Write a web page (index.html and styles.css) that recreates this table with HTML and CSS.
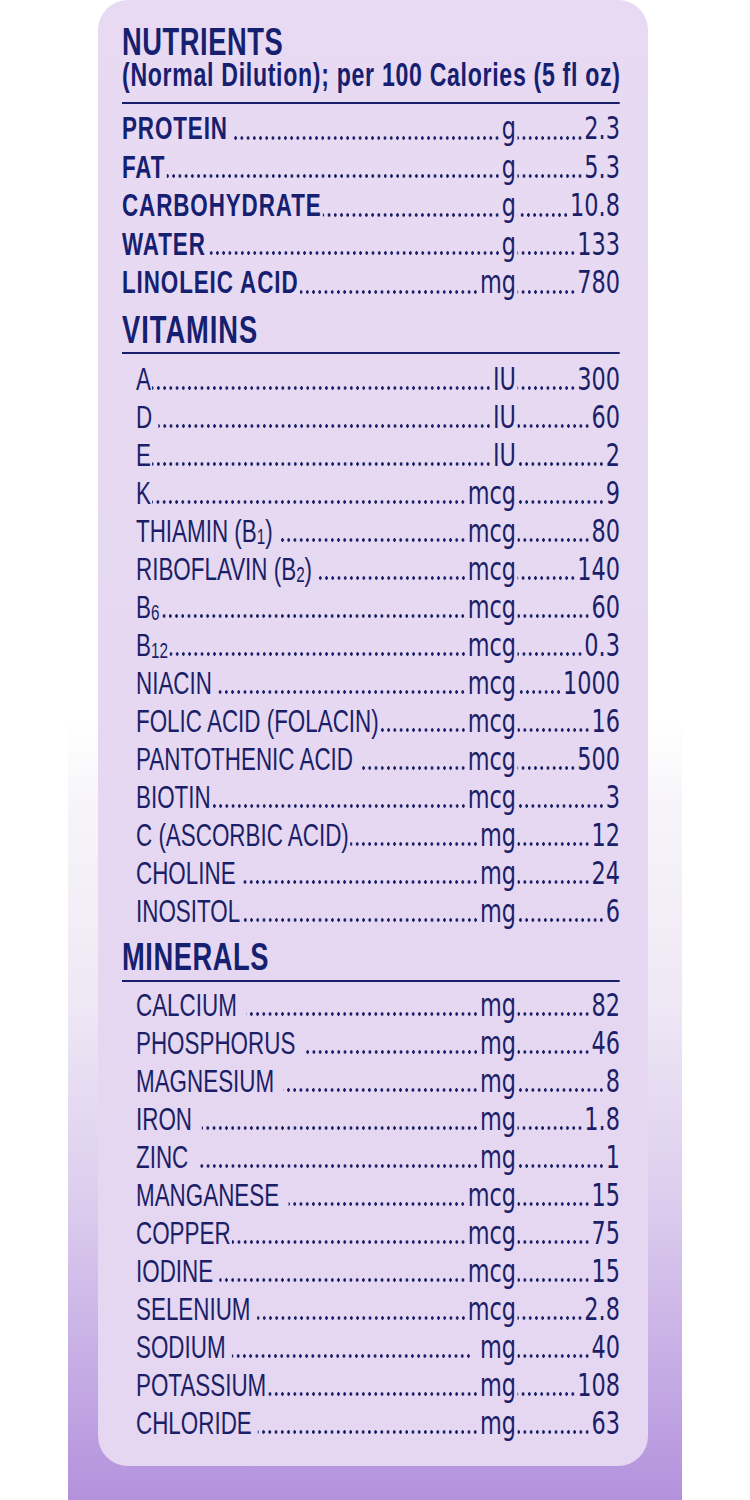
FILE: index.html
```html
<!DOCTYPE html>
<html lang="en">
<head>
<meta charset="utf-8">
<title>Nutrients</title>
<link rel="stylesheet" href="styles.css">
</head>
<body>
<div class="band">
  <div class="panel">
    <div class="content">
      <h1 class="title">NUTRIENTS</h1>
      <p class="subtitle">(Normal Dilution); per 100 Calories (5 fl oz)</p>
      <div class="rule"></div>
      <div class="rows rows-main">
        <div class="row bold"><span class="lbl">PROTEIN</span><span class="lead gap"></span><span class="unit">g</span><span class="val"><span class="lead"></span><span class="num">2.3</span></span></div>
        <div class="row bold"><span class="lbl">FAT</span><span class="lead"></span><span class="unit">g</span><span class="val"><span class="lead"></span><span class="num">5.3</span></span></div>
        <div class="row bold"><span class="lbl">CARBOHYDRATE</span><span class="lead"></span><span class="unit">g</span><span class="val"><span class="lead"></span><span class="num">10.8</span></span></div>
        <div class="row bold"><span class="lbl">WATER</span><span class="lead"></span><span class="unit">g</span><span class="val"><span class="lead"></span><span class="num">133</span></span></div>
        <div class="row bold"><span class="lbl">LINOLEIC ACID</span><span class="lead"></span><span class="unit">mg</span><span class="val"><span class="lead"></span><span class="num">780</span></span></div>
      </div>
      <h2 class="section">VITAMINS</h2>
      <div class="rule rule-vit"></div>
      <div class="rows rows-vit">
        <div class="row sub"><span class="lbl">A</span><span class="lead"></span><span class="unit">IU</span><span class="val"><span class="lead"></span><span class="num">300</span></span></div>
        <div class="row sub"><span class="lbl">D</span><span class="lead gap"></span><span class="unit">IU</span><span class="val"><span class="lead"></span><span class="num">60</span></span></div>
        <div class="row sub"><span class="lbl">E</span><span class="lead"></span><span class="unit">IU</span><span class="val"><span class="lead"></span><span class="num">2</span></span></div>
        <div class="row sub"><span class="lbl">K</span><span class="lead"></span><span class="unit">mcg</span><span class="val"><span class="lead"></span><span class="num">9</span></span></div>
        <div class="row sub"><span class="lbl">THIAMIN (B<sub>1</sub>)</span><span class="lead gap"></span><span class="unit">mcg</span><span class="val"><span class="lead"></span><span class="num">80</span></span></div>
        <div class="row sub"><span class="lbl">RIBOFLAVIN (B<sub>2</sub>)</span><span class="lead gap"></span><span class="unit">mcg</span><span class="val"><span class="lead"></span><span class="num">140</span></span></div>
        <div class="row sub"><span class="lbl">B<sub>6</sub></span><span class="lead"></span><span class="unit">mcg</span><span class="val"><span class="lead"></span><span class="num">60</span></span></div>
        <div class="row sub"><span class="lbl">B<sub>12</sub></span><span class="lead"></span><span class="unit">mcg</span><span class="val"><span class="lead"></span><span class="num">0.3</span></span></div>
        <div class="row sub"><span class="lbl">NIACIN</span><span class="lead gap"></span><span class="unit">mcg</span><span class="val"><span class="lead"></span><span class="num">1000</span></span></div>
        <div class="row sub"><span class="lbl">FOLIC ACID (FOLACIN)</span><span class="lead"></span><span class="unit">mcg</span><span class="val"><span class="lead"></span><span class="num">16</span></span></div>
        <div class="row sub"><span class="lbl">PANTOTHENIC ACID</span><span class="lead gap"></span><span class="unit">mcg</span><span class="val"><span class="lead"></span><span class="num">500</span></span></div>
        <div class="row sub"><span class="lbl">BIOTIN</span><span class="lead"></span><span class="unit">mcg</span><span class="val"><span class="lead"></span><span class="num">3</span></span></div>
        <div class="row sub"><span class="lbl">C (ASCORBIC ACID)</span><span class="lead"></span><span class="unit">mg</span><span class="val"><span class="lead"></span><span class="num">12</span></span></div>
        <div class="row sub"><span class="lbl">CHOLINE</span><span class="lead gap"></span><span class="unit">mg</span><span class="val"><span class="lead"></span><span class="num">24</span></span></div>
        <div class="row sub"><span class="lbl">INOSITOL</span><span class="lead"></span><span class="unit">mg</span><span class="val"><span class="lead"></span><span class="num">6</span></span></div>
      </div>
      <h2 class="section section-min">MINERALS</h2>
      <div class="rule rule-min"></div>
      <div class="rows rows-min">
        <div class="row sub"><span class="lbl">CALCIUM</span><span class="lead wide"></span><span class="unit">mg</span><span class="val"><span class="lead"></span><span class="num">82</span></span></div>
        <div class="row sub"><span class="lbl">PHOSPHORUS</span><span class="lead wide"></span><span class="unit">mg</span><span class="val"><span class="lead"></span><span class="num">46</span></span></div>
        <div class="row sub"><span class="lbl">MAGNESIUM</span><span class="lead wide"></span><span class="unit">mg</span><span class="val"><span class="lead"></span><span class="num">8</span></span></div>
        <div class="row sub"><span class="lbl">IRON</span><span class="lead wide"></span><span class="unit">mg</span><span class="val"><span class="lead"></span><span class="num">1.8</span></span></div>
        <div class="row sub"><span class="lbl">ZINC</span><span class="lead wide"></span><span class="unit">mg</span><span class="val"><span class="lead"></span><span class="num">1</span></span></div>
        <div class="row sub"><span class="lbl">MANGANESE</span><span class="lead wide"></span><span class="unit">mcg</span><span class="val"><span class="lead"></span><span class="num">15</span></span></div>
        <div class="row sub"><span class="lbl">COPPER</span><span class="lead"></span><span class="unit">mcg</span><span class="val"><span class="lead"></span><span class="num">75</span></span></div>
        <div class="row sub"><span class="lbl">IODINE</span><span class="lead gap"></span><span class="unit">mcg</span><span class="val"><span class="lead"></span><span class="num">15</span></span></div>
        <div class="row sub"><span class="lbl">SELENIUM</span><span class="lead gap"></span><span class="unit">mcg</span><span class="val"><span class="lead"></span><span class="num">2.8</span></span></div>
        <div class="row sub"><span class="lbl">SODIUM</span><span class="lead gap"></span><span class="unit unit-gap">mg</span><span class="val"><span class="lead"></span><span class="num">40</span></span></div>
        <div class="row sub"><span class="lbl">POTASSIUM</span><span class="lead"></span><span class="unit">mg</span><span class="val"><span class="lead"></span><span class="num">108</span></span></div>
        <div class="row sub"><span class="lbl">CHLORIDE</span><span class="lead gap"></span><span class="unit">mg</span><span class="val"><span class="lead"></span><span class="num">63</span></span></div>
      </div>
    </div>
  </div>
</div>
</body>
</html>
```

FILE: styles.css
```css
html, body {
  margin: 0;
  padding: 0;
  background: #ffffff;
}

body {
  width: 750px;
  height: 1500px;
  overflow: hidden;
  font-family: "Liberation Sans", Arial, sans-serif;
  color: #1b1f68;
}

.band {
  width: 614px;
  height: 1500px;
  margin-left: 68px;
  background: linear-gradient(to bottom,
    #ffffff 0px,
    #ffffff 720px,
    #f7f5f9 800px,
    #efe8f5 1000px,
    #dccdee 1200px,
    #c4aae4 1380px,
    #b391dc 1500px);
  overflow: hidden;
}

.panel {
  margin-left: 30px;
  width: 550px;
  height: 1466px;
  box-sizing: border-box;
  padding: 25px 0 0 24px;
  background: linear-gradient(to bottom, #e7daf2 0%, #e5d6f1 100%);
  border-radius: 30px;
}

/* Condensed typesetting: the whole block is set in Liberation Sans
   and compressed horizontally to the condensed width of the label. */
.content {
  width: 711.43px;
  transform: scaleX(0.7);
  transform-origin: 0 0;
}

.title {
  margin: 0;
  font-size: 39px;
  line-height: 33px;
  font-weight: 700;
  letter-spacing: 0.8px;
  color: #162070;
}

.subtitle {
  margin: 1px 0 0 0;
  font-size: 33px;
  line-height: 32px;
  font-weight: 700;
  letter-spacing: 1px;
  color: #162070;
  white-space: nowrap;
}

.rule {
  height: 2px;
  background: #1a1f6a;
  margin-top: 11px;
}

.rule-vit {
  margin-top: 2px;
}

.rule-min {
  margin-top: 3px;
}

.section {
  margin: 8px 0 0 0;
  font-size: 39px;
  line-height: 40px;
  font-weight: 700;
  letter-spacing: 1.4px;
  color: #162070;
}

.section-min {
  margin-top: 7px;
  letter-spacing: 0.8px;
}

.rows-main {
  margin-top: 5px;
}

.rows-vit {
  margin-top: 6px;
}

.rows-min {
  margin-top: 4px;
}

.row {
  display: flex;
  align-items: stretch;
  height: 38px;
  font-size: 32px;
  line-height: 38px;
  white-space: nowrap;
}

.rows-main .row {
  height: 38.5px;
  line-height: 38.5px;
}

.row.bold .lbl {
  font-weight: 700;
  letter-spacing: 1.3px;
  color: #162070;
}

.row.sub .lbl {
  margin-left: 20px;
}

.lbl sub {
  font-size: 0.68em;
  vertical-align: -0.08em;
  line-height: 0;
}

.lead {
  flex: 1 1 auto;
  min-width: 0;
  margin: 0 2px;
  background-image: radial-gradient(circle at center, #1b1f68 1.6px, rgba(27, 31, 104, 0) 2.1px);
  background-size: 8.9px 4px;
  background-repeat: repeat-x;
  background-position: right 0 top 26.5px;
}

.lead.gap {
  margin-left: 9px;
}

.lead.wide {
  margin-left: 14px;
}

/* Units and figures use the rounder, wider DejaVu glyphs,
   closer to the condensed face's lowercase and digits. */
.unit,
.num {
  flex: 0 0 auto;
  font-family: "DejaVu Sans", "Liberation Sans", sans-serif;
  font-weight: 400;
}

.unit-gap {
  margin-left: 10px;
}

.val {
  flex: 0 0 148.6px;
  display: flex;
}
```
